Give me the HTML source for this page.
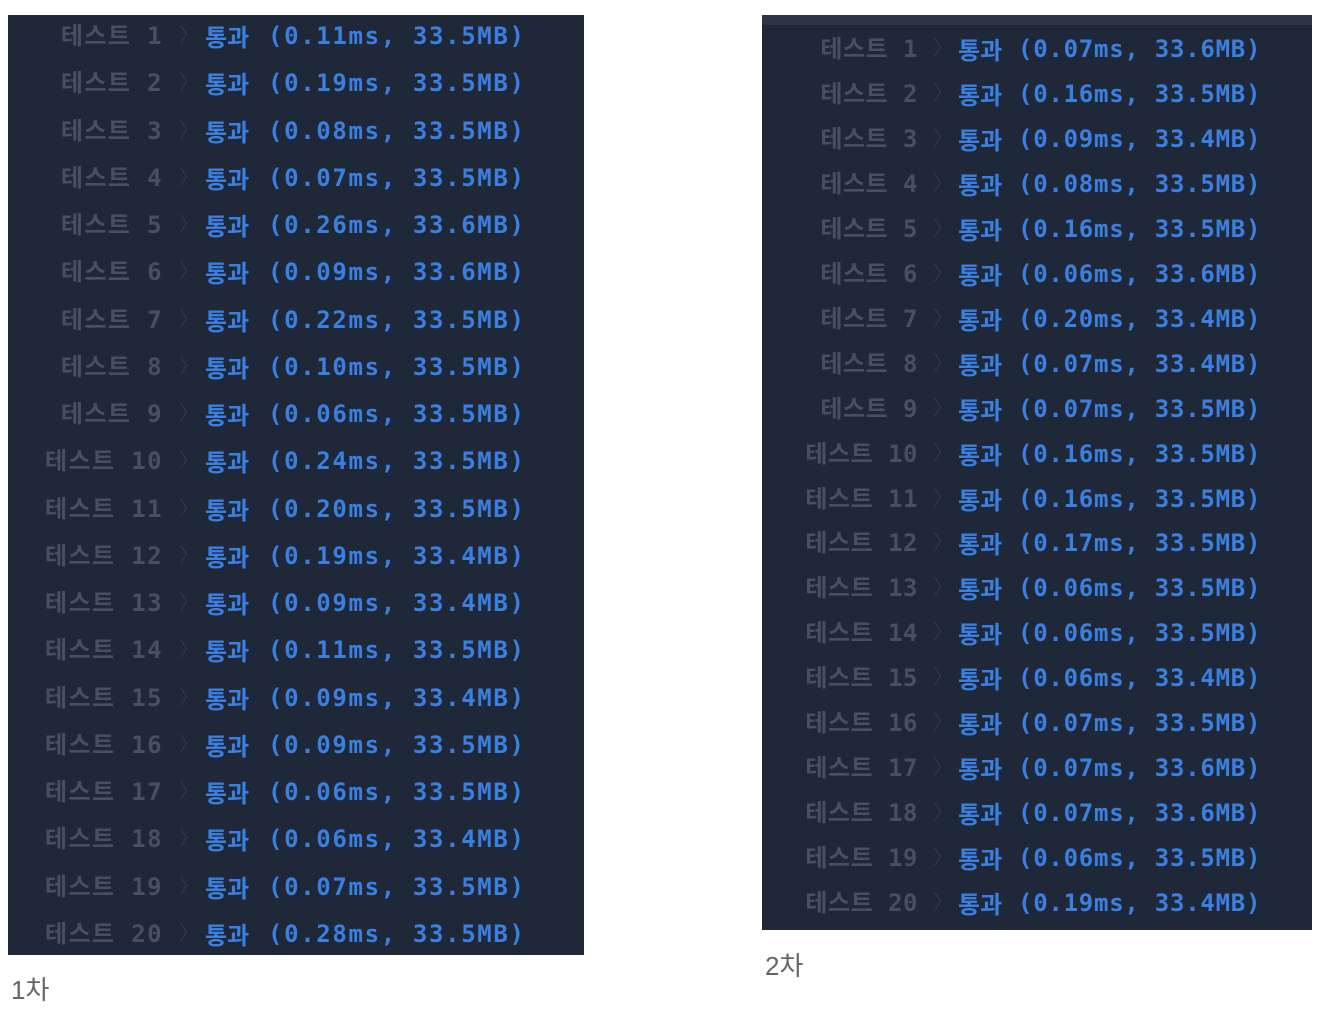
<!DOCTYPE html>
<html><head><meta charset="utf-8"><style>
body{margin:0;width:1322px;height:1016px;background:#fff;position:relative;overflow:hidden}
.p{position:absolute;background:#1f2838}
.r{position:absolute;height:30px;line-height:30px;font-family:"DejaVu Sans Mono","Noto Sans CJK KR",monospace;font-size:24px;white-space:nowrap;font-weight:bold}
.r span{line-height:30px}
.l{position:absolute;text-align:right;color:#465061;width:200px}
.c{position:absolute;color:#2f3847;font-family:"Liberation Sans",sans-serif;font-weight:normal;font-size:20px}
.s{position:absolute;color:#3b7fe0;font-weight:bold;font-family:"Noto Sans CJK KR",sans-serif}
.t{position:absolute;color:#3b7fe0}
.cap{position:absolute;font-family:"Liberation Sans","Noto Sans CJK KR",sans-serif;font-size:26px;color:#666}
</style></head><body>
<div class="p" style="left:8px;top:15px;width:576px;height:940px"></div>
<div class="p" style="left:762px;top:15px;width:550px;height:915px"></div>
<div style="position:absolute;left:762px;top:15px;width:550px;height:10px;background:#2b3546"></div>
<div class="cap" style="left:11px;top:970px">1차</div>
<div class="cap" style="left:765px;top:946px">2차</div>
<div id="L"></div><div id="R"></div>
<script>
var a=["0.11ms, 33.5MB","0.19ms, 33.5MB","0.08ms, 33.5MB","0.07ms, 33.5MB","0.26ms, 33.6MB","0.09ms, 33.6MB","0.22ms, 33.5MB","0.10ms, 33.5MB","0.06ms, 33.5MB","0.24ms, 33.5MB","0.20ms, 33.5MB","0.19ms, 33.4MB","0.09ms, 33.4MB","0.11ms, 33.5MB","0.09ms, 33.4MB","0.09ms, 33.5MB","0.06ms, 33.5MB","0.06ms, 33.4MB","0.07ms, 33.5MB","0.28ms, 33.5MB"];
var b=["0.07ms, 33.6MB","0.16ms, 33.5MB","0.09ms, 33.4MB","0.08ms, 33.5MB","0.16ms, 33.5MB","0.06ms, 33.6MB","0.20ms, 33.4MB","0.07ms, 33.4MB","0.07ms, 33.5MB","0.16ms, 33.5MB","0.16ms, 33.5MB","0.17ms, 33.5MB","0.06ms, 33.5MB","0.06ms, 33.5MB","0.06ms, 33.4MB","0.07ms, 33.5MB","0.07ms, 33.6MB","0.07ms, 33.6MB","0.06ms, 33.5MB","0.19ms, 33.4MB"];
var h="";
for(var i=0;i<20;i++){
 var y=35+i*47.26-14;
 h+='<div class="r" style="left:0;top:'+y+'px;width:600px;letter-spacing:1.4px"><span class="l" style="left:-37px">테스트 '+(i+1)+'</span><span class="c" style="left:179px">〉</span><span class="s" style="left:205px;letter-spacing:0">통과</span><span class="t" style="left:268px;letter-spacing:1.65px">('+a[i]+')</span></div>';
 y=48+i*44.95-14;
 h+='<div class="r" style="left:754px;top:'+y+'px;width:600px;letter-spacing:0.5px"><span class="l" style="left:-36px">테스트 '+(i+1)+'</span><span class="c" style="left:179px">〉</span><span class="s" style="left:204px;letter-spacing:0">통과</span><span class="t" style="left:264px;letter-spacing:0.75px">('+b[i]+')</span></div>';
}
document.getElementById("L").innerHTML=h;
</script>
</body></html>
